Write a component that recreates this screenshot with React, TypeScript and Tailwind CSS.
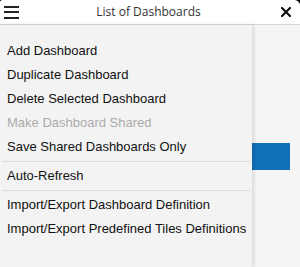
import React from 'react';

const App: React.FC = () => {
  const groups: { label: string; disabled?: boolean }[][] = [
    [
      { label: "Add Dashboard" },
      { label: "Duplicate Dashboard" },
      { label: "Delete Selected Dashboard" },
      { label: "Make Dashboard Shared", disabled: true },
      { label: "Save Shared Dashboards Only" }
    ],
    [{ label: "Auto-Refresh" }],
    [
      { label: "Import/Export Dashboard Definition" },
      { label: "Import/Export Predefined Tiles Definitions" }
    ]
  ];

  return (
    <div className="w-[300px] h-[267px] bg-black overflow-hidden">
      <div className="w-full h-full flex flex-col bg-[#f5f5f5] rounded-tl-[3px] rounded-tr-[6px] overflow-hidden">
        {/* header */}
        <div className="h-[25px] shrink-0 flex items-center bg-white border-b border-[#d6d6d6] px-[4px]">
          <button className="flex flex-col gap-[3.5px] w-[15px]">
            <span className="block h-[2px] w-[15px] bg-[#222]" />
            <span className="block h-[2px] w-[15px] bg-[#222]" />
            <span className="block h-[2px] w-[15px] bg-[#222]" />
          </button>
          <div className="flex-1 text-center text-[12px] text-[#333] font-['Open_Sans',sans-serif] leading-none pb-[1px]">
            List of Dashboards
          </div>
          <button className="w-[15px] h-[15px] flex items-center justify-center mr-[3px]">
            <svg width="10" height="10" viewBox="0 0 10 10">
              <path d="M1 1L9 9M9 1L1 9" stroke="#111" strokeWidth="2.2" strokeLinecap="square" />
            </svg>
          </button>
        </div>

        <div className="flex flex-1 min-h-0">
          {/* menu */}
          <div className="w-[252px] shrink-0 bg-[#f3f3f3] pt-[14px] shadow-[2px_0_4px_rgba(0,0,0,0.12)] relative z-10 font-['Liberation_Sans',Arial,sans-serif] text-[13px]">
            {groups.map((group, gi) => (
              <div key={`group-${gi}`}>
                {gi > 0 && <div className="mx-[2px] my-[2px] border-t border-[#d9d9d9]" />}
                {group.map((item) => (
                  <div
                    key={item.label}
                    className={`h-6 leading-6 pl-[7px] whitespace-nowrap ${item.disabled ? "text-[#ababab]" : "text-[#111]"}`}
                  >
                    {item.label}
                  </div>
                ))}
              </div>
            ))}
          </div>

          {/* background content */}
          <div className="flex-1 pt-[118px]">
            <div className="w-[38px] h-[27px] bg-[#1170b8]" />
          </div>
        </div>
      </div>
    </div>
  );
};

export default App;
